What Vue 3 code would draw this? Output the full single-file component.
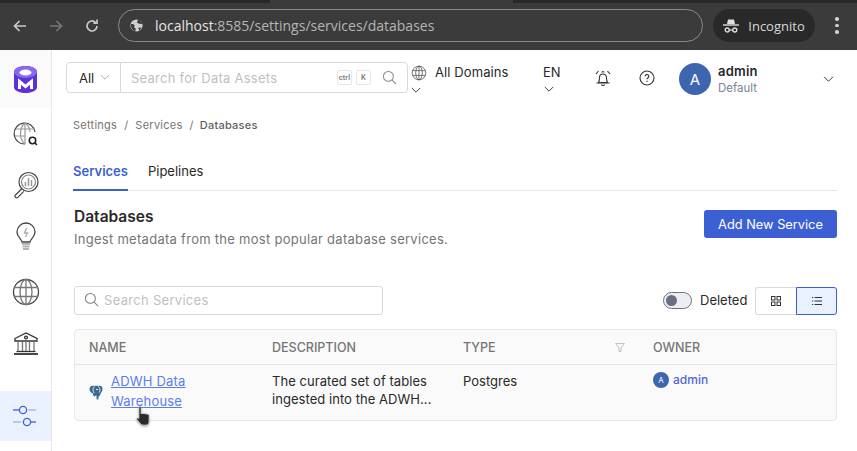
<template>
  <div class="page">
    <div class="browser-bar">
      <div class="tab-strip"></div>
      <div class="browser-row">
        <svg class="nav-icon" viewBox="0 0 16 16"><path d="M14 8H3M7.5 3 2.5 8l5 5" fill="none" stroke="#c8c8c8" stroke-width="1.7" /></svg>
        <svg class="nav-icon" viewBox="0 0 16 16"><path d="M2 8h11M8.5 3l5 5-5 5" fill="none" stroke="#777" stroke-width="1.7" /></svg>
        <svg class="nav-icon" viewBox="0 0 16 16"><path d="M13 8a5 5 0 1 1-1.6-3.7M13 1.6v3.6H9.4" fill="none" stroke="#c8c8c8" stroke-width="1.7" /></svg>
        <div class="url-pill">
          <svg class="url-globe" viewBox="0 0 16 16"><circle cx="8" cy="8" r="6.5" fill="#d0d0d0" /><path d="M2 6.500c1.500-.5 3 0 4 1.200l-.5 2.300 1.800 1.500-.6 2.500c-3-.5-5-3.500-4.700-7.500zM9.500 1.800 8.500 5l3.200 1.500 2.600-.5c-.5-2-2.400-3.700-4.800-4.200zM10 10l3.500.5-2.500 3z" fill="#3b3b3b" /></svg>
          <span class="url-host">localhost</span><span class="url-rest">:8585/settings/services/databases</span>
        </div>
        <div class="incognito">
          <svg class="spy" viewBox="0 0 16 16"><path d="M4 6 5 1.500h6L12 6z" fill="#e0e0e0" /><path d="M0 7h16" stroke="#e0e0e0" stroke-width="1.400" /><circle cx="4.200" cy="12" r="2" fill="none" stroke="#e0e0e0" stroke-width="1.300" /><circle cx="11.800" cy="12" r="2" fill="none" stroke="#e0e0e0" stroke-width="1.300" /><path d="M6.200 12h3.600" stroke="#e0e0e0" stroke-width="1.200" /></svg>
          <span>Incognito</span>
        </div>
        <div class="dots"><i></i><i></i><i></i></div>
      </div>
    </div>

    <div class="app-body">
      <aside class="sidebar">
        <div class="logo-cell">
          <svg width="23" height="27" viewBox="0 0 23 27">
            <path d="M0 6C0 2.500 5 0 11.500 0S23 2.500 23 6v15c0 3.500-5 6-11.500 6S0 24.500 0 21z" fill="#5b33d6" />
            <ellipse cx="11.500" cy="6" rx="11.500" ry="6" fill="#8a68f0" />
            <ellipse cx="11.500" cy="6.500" rx="6" ry="3" fill="#fff" />
            <polyline points="5.500,23 5.500,15.500 11.500,20.500 17.500,15.500 17.500,23" fill="none" stroke="#fff" stroke-width="3" />
          </svg>
        </div>
        <div class="side-item">
          <svg width="26" height="26" viewBox="0 0 26 26" fill="none" stroke="#444" stroke-width="1.2">
            <path d="M22 11A10.500 10.500 0 1 0 12 23" />
            <path d="M12 2c-6 5-6 16 0 21M12 2c3.500 2.500 5 6 5 9M3 8h18M2 15h10M12 2v21" stroke="#999" />
            <circle cx="19.500" cy="19.500" r="3.200" stroke="#222" stroke-width="1.600" /><path d="m22 22 2 2" stroke="#222" stroke-width="1.600" />
          </svg>
        </div>
        <div class="side-item">
          <svg width="28" height="28" viewBox="0 0 28 28" fill="none" stroke="#444" stroke-width="1.2">
            <circle cx="16.500" cy="11" r="9.500" /><circle cx="16.500" cy="11" r="7" stroke="#888" />
            <path d="M13.500 15v-4M16.500 15V7M19.500 15v-6" stroke="#999" stroke-width="1.500" />
            <path d="m9.500 18-6 6a1.600 1.600 0 0 0 2.300 2.300l6-6" />
          </svg>
        </div>
        <div class="side-item">
          <svg width="22" height="28" viewBox="0 0 22 28" fill="none" stroke="#444" stroke-width="1.3">
            <path d="M7 20c0-3-5-4.500-5-10a9 9 0 0 1 18 0c0 5.500-5 7-5 10z" />
            <path d="M11.500 6 9.500 11h3l-2 4" stroke="#aaa" />
            <path d="M7 22h8M7.500 24.500h7M8 27h6" stroke="#b5b5b5" stroke-width="2" />
          </svg>
        </div>
        <div class="side-item globe-item">
          <svg width="28" height="28" viewBox="0 0 28 28" fill="none" stroke="#444" stroke-width="1.3">
            <circle cx="14" cy="14" r="12.500" />
            <ellipse cx="14" cy="14" rx="6" ry="12.500" stroke="#777" /><path d="M14 1.500v25M2 9.500h24M2 18.500h24" stroke="#777" />
          </svg>
        </div>
        <div class="side-item">
          <svg width="26" height="24" viewBox="0 0 26 24" fill="none" stroke="#333" stroke-width="1.300">
            <path d="M2 7.500 13 2l11 5.500v2.500H2z" />
            <circle cx="13" cy="6.500" r="1.400" />
            <path d="M5 11v9M9.500 11v9M13 11v9M16.500 11v9M21 11v9" stroke="#777" />
            <path d="M3.500 20.500h19" /><path d="M1 23h24" stroke-width="1.800" />
          </svg>
        </div>
        <div class="side-item active">
          <svg width="26" height="26" viewBox="0 0 26 26" fill="none" stroke="#3f63d8" stroke-width="1.300">
            <circle cx="10" cy="7" r="3.600" /><path d="M0 7h6.400" /><path d="M15.500 7H23" stroke="#9db0ea" />
            <circle cx="14" cy="19" r="3.600" /><path d="M0 19h8" stroke="#9db0ea" /><path d="M17.600 19H23" />
          </svg>
        </div>
      </aside>

      <main class="main">
        <header class="topbar">
          <div class="global-search">
            <div class="search-type"><span>All</span><svg class="chev light" viewBox="0 0 12 8"><path d="m1 1 5 5 5-5" /></svg></div>
            <div class="search-field">
              <span class="placeholder">Search for Data Assets</span>
              <kbd>ctrl</kbd><kbd class="key-k">K</kbd>
              <svg class="search-glass" viewBox="0 0 16 16"><circle cx="6.800" cy="6.800" r="5.300" /><path d="m10.800 10.800 4.200 4.200" /></svg>
            </div>
          </div>
          <div class="domains">
            <div class="domain-icon-wrap">
              <svg class="domain-globe" viewBox="0 0 18 18" fill="none" stroke="#555" stroke-width=".9"><circle cx="9" cy="9" r="7.700" /><ellipse cx="9" cy="9" rx="3.700" ry="7.700" /><path d="M9 1.300v15.400M1.800 6.300h14.400M1.800 11.700h14.400" /></svg>
              <svg class="chev" viewBox="0 0 12 8"><path d="m1 1 5 5 5-5" /></svg>
            </div>
            <span class="domain-label">All Domains</span>
          </div>
          <div class="lang">
            <span>EN</span>
            <svg class="chev" viewBox="0 0 12 8"><path d="m1 1 5 5 5-5" /></svg>
          </div>
          <svg class="bell" viewBox="0 0 18 18" fill="none" stroke="#333" stroke-width="1.100"><path d="M4.500 13.500c1-1.500 1-3 1-5a3.500 3.500 0 0 1 7 0c0 2 0 3.500 1 5zM2.500 14h13M7.500 15.500a1.600 1.600 0 0 0 3 0M8 3.500a1 1 0 0 1 2 0M4.500 2 2 5M13.500 2 16 5" /></svg>
          <svg class="help" viewBox="0 0 16 16"><circle cx="8" cy="8" r="7" fill="none" stroke="#333" stroke-width="1.100" /><path d="M6.200 6.300a1.800 1.800 0 1 1 2.800 1.500c-.6.400-1 .7-1 1.500" fill="none" stroke="#333" stroke-width="1.100" /><circle cx="8" cy="11.300" r=".7" fill="#333" /></svg>
          <div class="avatar">A</div>
          <div class="user">
            <span class="user-name">admin</span>
            <span class="user-role">Default</span>
          </div>
          <svg class="chev user-chev" viewBox="0 0 12 8"><path d="m1 1 5 5 5-5" /></svg>
        </header>

        <section class="content">
          <nav class="crumbs">
            <span>Settings</span><i>/</i><span>Services</span><i>/</i><span class="crumb-now">Databases</span>
          </nav>

          <div class="tabs">
            <span class="tab on">Services</span>
            <span class="tab">Pipelines</span>
          </div>

          <div class="heading-row">
            <div>
              <h1>Databases</h1>
              <p>Ingest metadata from the most popular database services.</p>
            </div>
            <button class="add-btn">Add New Service</button>
          </div>

          <div class="filter-row">
            <div class="service-search">
              <svg viewBox="0 0 16 16"><circle cx="6.800" cy="6.800" r="5.300" /><path d="m10.800 10.800 4.200 4.200" /></svg>
              <span>Search Services</span>
            </div>
            <div class="filter-right">
              <div class="toggle"><b></b></div>
              <span class="deleted">Deleted</span>
              <div class="view-switch">
                <div class="view-btn">
                  <svg viewBox="0 0 10 10" fill="none" stroke="#333" stroke-width="1"><rect x=".5" y=".5" width="3.500" height="3.500" /><rect x="6" y=".5" width="3.500" height="3.500" /><rect x=".5" y="6" width="3.500" height="3.500" /><rect x="6" y="6" width="3.500" height="3.500" /></svg>
                </div>
                <div class="view-btn selected">
                  <svg viewBox="0 0 10 10" fill="none" stroke="#333" stroke-width="1"><path d="M2.500 1.500h7.500M2.500 5h7.500M2.500 8.500h7.500M0 1.500h1.200M0 5h1.200M0 8.500h1.200" /></svg>
                </div>
              </div>
            </div>
          </div>

          <div class="table">
            <div class="row head">
              <div class="cell">NAME</div>
              <div class="cell">DESCRIPTION</div>
              <div class="cell type-head">TYPE<svg viewBox="0 0 10 10" fill="none" stroke="#bbb" stroke-width=".9"><path d="M.5 1h9L6 5.500V9H4V5.500z" /></svg></div>
              <div class="cell">OWNER</div>
            </div>
            <div class="row body">
              <div class="cell name-cell">
                <svg class="pg" viewBox="0 0 14 15"><path d="M.5 3.500C1 1 3.500.5 5.500 1c1-.5 2.500-.5 3.500 0 2-.5 4.500 0 4.500 2.500 0 2-1 4-2 5 0 2-.8 2.500-1.800 2.500l-.4 3.500H7.700L7.300 10l-1.600 1.500C4.500 11.500 4 10 4 8.500 2 8 .2 6 .5 3.500z" fill="#3a6a92" /><path d="M5.500 1.500C3.500 3 3.700 6 5.200 8.200M9.300 1.300c1.700 1.500 2.200 4 1 6.200M7 4.500h2.200" fill="none" stroke="#fff" stroke-width=".8" /></svg>
                <a>ADWH Data Warehouse</a>
              </div>
              <div class="cell desc">The curated set of tables ingested into the ADWH...</div>
              <div class="cell type-cell">Postgres</div>
              <div class="cell owner"><span class="owner-dot">A</span><span class="owner-name">admin</span></div>
            </div>
          </div>
        </section>
      </main>
    </div>

    <svg class="cursor" width="18" height="22" viewBox="0 0 18 22"><path d="M4 1.500c0-1.300 2-1.300 2 0V8c0-.8 2-.8 2 0 0-.7 2-.7 2 .2 0-.6 2-.6 2 .3.300-.4 2-.3 2 .7v6c0 2-1 3.800-3 3.800H8c-1.500 0-2.500-1-3.500-2.500L2 13.500c-.8-1.200.8-2.300 2-1z" fill="#2b2b2b" stroke="#ddd" stroke-width=".6" /></svg>
  </div>
</template>

<script setup>
</script>

<style>
html, body { margin: 0; background: #fff; }
</style>

<style scoped>
.page {
  position: relative;
  width: 857px;
  height: 451px;
  overflow: hidden;
  display: flex;
  flex-direction: column;
  font-family: Inter, "Noto Sans", sans-serif;
  color: #292929;
  background: #fff;
}

/* browser chrome */
.browser-bar {
  height: 50px;
  flex: none;
  background: #3b3b3b;
}
.tab-strip {
  height: 3px;
  background: linear-gradient(90deg, #282828 0 270px, #3b3b3b 270px 513px, #282828 513px);
}
.browser-row {
  display: flex;
  align-items: center;
  height: 33px;
  margin-top: 6px;
  padding-left: 12px;
}
.nav-icon { width: 16px; height: 16px; margin-right: 20px; }
.nav-icon:nth-child(3) { margin-right: 18px; }
.url-pill {
  width: 585px;
  height: 33px;
  box-sizing: border-box;
  border: 1px solid #8b8b8b;
  border-radius: 17px;
  display: flex;
  align-items: center;
  padding-left: 10px;
  font-family: "Open Sans", sans-serif;
  font-size: 14px;
}
.url-globe { width: 15px; height: 15px; margin-right: 11px; }
.url-host { color: #e4e4e4; }
.url-rest { color: #b5b5b5; }
.incognito {
  margin-left: 10px;
  width: 102px;
  height: 33px;
  background: #292929;
  border-radius: 17px;
  display: flex;
  align-items: center;
  justify-content: center;
  gap: 9px;
  color: #d8d8d8;
  font-family: "Open Sans", sans-serif;
  font-size: 13px;
}
.spy { width: 16px; height: 16px; }
.dots {
  margin-left: 20px;
  display: flex;
  flex-direction: column;
  gap: 3px;
}
.dots i { width: 3.500px; height: 3.500px; border-radius: 50%; background: #d0d0d0; }

.app-body { flex: 1; display: flex; min-height: 0; }

/* left rail */
.sidebar {
  width: 51px;
  flex: none;
  border-right: 1px solid #e8e8e8;
  display: flex;
  flex-direction: column;
  align-items: center;
}
.logo-cell {
  width: 100%;
  height: 58px;
  background: #fafafa;
  display: flex;
  align-items: center;
  justify-content: center;
}
.side-item {
  width: 100%;
  height: 51px;
  display: flex;
  align-items: center;
  justify-content: center;
}
.globe-item { margin-top: 5px; }
.side-item.active {
  margin-top: 23px;
  height: 50px;
  background: #e8f1fd;
}

.main { flex: 1; min-width: 0; }

/* top bar */
.topbar {
  height: 58px;
  position: relative;
  display: flex;
  align-items: flex-start;
  padding: 12px 0 0 14px;
  box-sizing: border-box;
}
.global-search {
  width: 342px;
  height: 31px;
  box-sizing: border-box;
  flex: none;
  display: flex;
  border: 1px solid #d9d9d9;
  border-radius: 4px;
  font-size: 13px;
}
.search-type {
  width: 54px;
  border-right: 1px solid #d9d9d9;
  display: flex;
  align-items: center;
  padding-left: 12px;
  gap: 6px;
  box-sizing: border-box;
}
.search-field {
  flex: 1;
  display: flex;
  align-items: center;
  padding: 0 10px;
}
.placeholder { flex: 1; color: #bfbfbf; letter-spacing: .25px; }
kbd {
  font-family: Inter, sans-serif;
  font-size: 7px;
  font-weight: 600;
  color: #777;
  border: 1px solid #e6e6e6;
  border-radius: 2px;
  height: 13px;
  line-height: 13px;
  padding: 0 1px;
  margin-right: 4px;
}
.key-k { padding: 0 4px; margin-right: 11px; }
.search-glass { width: 15px; height: 15px; fill: none; stroke: #8a8a8a; stroke-width: 1.100; }
.chev {
  width: 10px;
  height: 7px;
  fill: none;
  stroke: #333;
  stroke-width: 1.100;
  display: block;
}
.chev.light { stroke: #aaa; }
.domains {
  display: flex;
  margin-left: 3px;
  width: 132px;
  flex: none;
}
.domain-icon-wrap { width: 24px; flex: none; padding-top: 3px; }
.domain-globe { width: 16px; height: 16px; display: block; margin-bottom: 6px; }
.domain-label { font-size: 13px; margin-top: 2px; letter-spacing: .1px; }
.lang { width: 51px; flex: none; font-size: 13px; padding-top: 2px; }
.lang span { display: block; height: 20px; }
.lang .chev { margin-left: 1px; margin-top: 2px; }
.bell { width: 18px; height: 18px; flex: none; margin-top: 7px; }
.help { width: 16px; height: 16px; flex: none; margin: 8px 0 0 27px; }
.avatar {
  width: 32px;
  height: 32px;
  flex: none;
  margin: 1px 0 0 24px;
  border-radius: 50%;
  background: #3d66ae;
  color: #fff;
  display: flex;
  align-items: center;
  justify-content: center;
  font-size: 15px;
}
.user { margin-left: 7px; width: 105px; flex: none; display: flex; flex-direction: column; }
.user-name { font-size: 13px; font-weight: 600; line-height: 18px; letter-spacing: .2px; }
.user-role { font-size: 11.500px; color: #7b8494; line-height: 16px; }
.user-chev { width: 11px; height: 7px; margin-top: 14px; }

/* page content */
.content { padding: 0 20px 0 22px; }
.crumbs {
  display: flex;
  align-items: center;
  height: 18px;
  margin-left: -1px;
  margin-top: 8px;
  font-size: 11px;
  letter-spacing: .25px;
  color: #757575;
}
.crumbs i { font-style: normal; margin: 0 7px; }
.crumb-now { color: #5e5e5e; font-weight: 500; margin-left: -1px; }
.tabs {
  display: flex;
  height: 39px;
  margin-top: 18px;
  margin-left: -1px;
  border-bottom: 1px solid #e6e6e6;
  box-sizing: border-box;
  font-size: 13px;
  gap: 20px;
}
.tab { padding-top: 11px; height: 39px; box-sizing: border-box; }
.tab.on { color: #3d5fd4; font-weight: 600; border-bottom: 2px solid #3d5fd4; }

.heading-row {
  display: flex;
  justify-content: space-between;
  align-items: flex-start;
  margin-top: 17px;
}
h1 { margin: -2px 0 0; font-size: 15.500px; font-weight: 600; line-height: 22px; color: #292929; }
p { margin: 1px 0 0; font-size: 13px; color: #757575; line-height: 20px; letter-spacing: .28px; }
.add-btn {
  width: 133px;
  height: 28px;
  margin-top: 2px;
  border: 0;
  border-radius: 3px;
  background: #3d5fd4;
  color: #fff;
  font-family: inherit;
  font-size: 12.800px;
  padding: 0;
}

.filter-row {
  display: flex;
  justify-content: space-between;
  align-items: center;
  margin-top: 37px;
}
.service-search {
  width: 309px;
  height: 29px;
  box-sizing: border-box;
  border: 1px solid #d9d9d9;
  border-radius: 3px;
  display: flex;
  align-items: center;
  padding: 0 0 2px 9px;
  gap: 5px;
  font-size: 13px;
  color: #bfbfbf;
  letter-spacing: .3px;
}
.service-search svg { width: 15px; height: 15px; fill: none; stroke: #808080; stroke-width: 1.100; }
.filter-right { display: flex; align-items: center; }
.toggle {
  width: 29px;
  height: 17px;
  box-sizing: border-box;
  border: 1px solid #6b7080;
  border-radius: 9px;
  background: #eceef1;
  display: flex;
  align-items: center;
  padding-left: 2px;
}
.toggle b { width: 11px; height: 11px; border-radius: 50%; background: #6b7080; }
.deleted { margin-left: 8px; font-size: 13px; width: 55px; padding-bottom: 2px; }
.view-switch { display: flex; height: 28px; }
.view-btn {
  width: 41px;
  box-sizing: border-box;
  border: 1px solid #d9d9d9;
  border-right: 0;
  border-radius: 3px 0 0 3px;
  display: flex;
  align-items: center;
  justify-content: center;
}
.view-btn.selected {
  border: 1px solid #3d5fd4;
  border-radius: 0 3px 3px 0;
  background: #e8f1fd;
}
.view-btn svg { width: 10px; height: 10px; }

.table {
  margin-top: 14px;
  border: 1px solid #e6e6e6;
  border-radius: 4px;
  background: #fafafa;
  overflow: hidden;
}
.row {
  display: grid;
  grid-template-columns: 183px 191px 190px 1fr;
  font-size: 13px;
}
.row.head {
  height: 35px;
  border-bottom: 1px solid #e6e6e6;
  box-sizing: border-box;
  font-size: 12.500px;
  font-weight: 500;
  color: #757575;
  align-items: center;
}
.row.body { height: 55px; }
.cell { padding: 0 14px; }
.type-head { display: flex; justify-content: space-between; align-items: center; }
.type-head svg { width: 10px; height: 11px; }
.name-cell { display: flex; align-items: center; gap: 8px; }
.pg { width: 14px; height: 15px; flex: none; }
.name-cell a {
  color: #5a7de8;
  text-decoration: underline;
  line-height: 20px;
  letter-spacing: .2px;
  width: 80px;
  margin-top: -4px;
}
.desc { padding-top: 7px; padding-right: 4px; line-height: 18px; letter-spacing: .05px; }
.type-cell { padding-top: 8px; }
.owner { display: flex; align-items: flex-start; gap: 4px; padding-top: 7px; }
.owner-dot {
  width: 16px;
  height: 16px;
  border-radius: 50%;
  background: #3d66ae;
  color: #fff;
  font-size: 8px;
  display: flex;
  align-items: center;
  justify-content: center;
}
.owner-name { color: #5565d8; font-size: 12px; font-weight: 500; }

/* mouse pointer over the link */
.cursor {
  position: absolute;
  left: 135px;
  top: 406px;
  filter: drop-shadow(0 1px 1px rgba(0, 0, 0, .4));
}
</style>
